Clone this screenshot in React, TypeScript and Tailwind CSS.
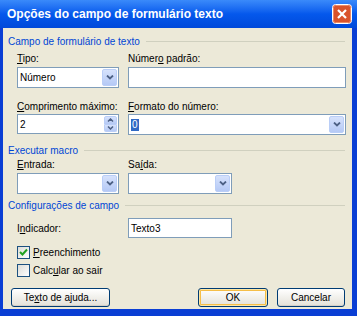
const font = { fontFamily: '"Liberation Sans", Arial, sans-serif' };

function Chevron() {
  return (
    <svg width="8" height="5" viewBox="0 0 8 5">
      <path d="M1 0.5 L4 3.5 L7 0.5" fill="none" stroke="#4D6185" strokeWidth="1.8" />
    </svg>
  );
}

function DropButton() {
  return (
    <div className="my-px mr-px flex w-[15px] items-center justify-center rounded-[2px] border border-[#BACEF7] bg-gradient-to-b from-[#D6E2FC] to-[#B5C9F5]">
      <Chevron />
    </div>
  );
}

function Combo({ width, value, selected }: { width: string; value?: string; selected?: boolean }) {
  return (
    <div className={`flex h-[21px] ${width} border border-[#7F9DB9] bg-white`}>
      <div className="flex flex-1 items-center pl-[2px] text-[10px] text-black">
        {selected ? <span className="bg-[#316AC5] px-px leading-[12px] text-white">0</span> : value}
      </div>
      <DropButton />
    </div>
  );
}

function Label({ children }: { children: React.ReactNode }) {
  return <div className="h-[13px] text-[10px] leading-[13px] text-black">{children}</div>;
}

function Section({ title }: { title: string }) {
  return (
    <div className="flex h-[13px] items-center">
      <span className="text-[10px] leading-[13px] text-[#0046D5]">{title}</span>
      <div className="ml-[6px] h-px flex-1 bg-[#D0D0BF]" />
    </div>
  );
}

function Checkbox({ checked, children }: { checked?: boolean; children: React.ReactNode }) {
  return (
    <div className="ml-[9px] flex h-[13px] items-center">
      <div className="flex h-[13px] w-[13px] items-center justify-center border border-[#1C5180] bg-gradient-to-br from-[#DCDCD7] to-white">
        {checked && (
          <svg width="9" height="9" viewBox="0 0 9 9">
            <path d="M1 4 L3.5 6.5 L8 1.5" fill="none" stroke="#21A121" strokeWidth="2" />
          </svg>
        )}
      </div>
      <span className="ml-[3px] text-[10px] leading-[13px] text-black">{children}</span>
    </div>
  );
}

function Button({ width, children, def }: { width: string; children: React.ReactNode; def?: boolean }) {
  return (
    <div
      className={`flex h-[19px] ${width} items-center justify-center rounded-[3px] border border-[#003C74] bg-gradient-to-b from-white to-[#E3E1D8] text-[10px] text-black ${
        def ? "shadow-[inset_0_0_0_1px_#FFE7A2,inset_0_0_0_2px_#F5BE48]" : "shadow-[inset_0_-1px_0_#D6D0C5]"
      }`}
    >
      {children}
    </div>
  );
}

function CloseButton() {
  return (
    <svg width="20" height="20" viewBox="0 0 20 20">
      <rect x="0.5" y="0.5" width="19" height="19" rx="3" fill="#D9532B" stroke="#FFFFFF" />
      <rect x="1.5" y="1.5" width="17" height="17" rx="2" fill="none" stroke="#EE8A64" />
      <path d="M6 6 L14 14 M14 6 L6 14" stroke="#FFFFFF" strokeWidth="2.2" />
    </svg>
  );
}

export default function App() {
  return (
    <div className="flex h-[316px] w-[357px] flex-col bg-[#0A3ED4]" style={font}>
      {/* Title bar */}
      <div className="flex h-[28px] items-center bg-gradient-to-b from-[#3A8AFA] via-[#0558EC] to-[#0049DA] pl-[7px] pr-[5px]">
        <span className="flex-1 text-[12px] font-bold text-white">Opções do campo de formulário texto</span>
        <CloseButton />
      </div>

      {/* Body */}
      <div className="mb-[7px] ml-[3px] mr-[5px] flex flex-1 flex-col bg-[#ECE9D8] pl-[5px] pr-[6px] pt-[7px]">
        <div className="mr-px">
          <Section title="Campo de formulário de texto" />
        </div>

        <div className="mt-[4px] ml-[9px] flex gap-[9px]">
          <div className="w-[102px]">
            <Label>
              <u>T</u>ipo:
            </Label>
            <div className="mt-[2px]">
              <Combo width="w-[102px]" value="Número" />
            </div>
          </div>
          <div className="flex-1">
            <Label>
              Númer<u>o</u> padrão:
            </Label>
            <div className="mt-[2px] h-[21px] border border-[#7F9DB9] bg-white" />
          </div>
        </div>

        <div className="mt-[12px] ml-[9px] flex gap-[9px]">
          <div className="w-[102px]">
            <Label>
              <u>C</u>omprimento máximo:
            </Label>
            <div className="mt-px flex h-[20px] w-[102px] border border-[#7F9DB9] bg-white">
              <div className="flex flex-1 items-center pl-[2px] text-[10px]">2</div>
              <div className="my-px mr-px flex w-[13px] flex-col">
                <div className="flex flex-1 items-center justify-center rounded-t-[2px] border border-[#BACEF7] bg-gradient-to-b from-[#D6E2FC] to-[#B5C9F5]">
                  <svg width="7" height="4" viewBox="0 0 7 4">
                    <path d="M1 3.5 L3.5 1 L6 3.5" fill="none" stroke="#4D6185" strokeWidth="1.5" />
                  </svg>
                </div>
                <div className="flex flex-1 items-center justify-center rounded-b-[2px] border border-t-0 border-[#BACEF7] bg-gradient-to-b from-[#D6E2FC] to-[#B5C9F5]">
                  <svg width="7" height="4" viewBox="0 0 7 4">
                    <path d="M1 0.5 L3.5 3 L6 0.5" fill="none" stroke="#4D6185" strokeWidth="1.5" />
                  </svg>
                </div>
              </div>
            </div>
          </div>
          <div className="flex-1">
            <Label>
              <u>F</u>ormato do número:
            </Label>
            <div className="mt-px">
              <Combo width="w-full h-[20px]" selected />
            </div>
          </div>
        </div>

        <div className="mt-[9px] mr-px">
          <Section title="Executar macro" />
        </div>

        <div className="mt-px ml-[9px] flex gap-[9px]">
          <div className="w-[102px]">
            <Label>
              <u>E</u>ntrada:
            </Label>
            <div className="mt-[2px]">
              <Combo width="w-[102px]" />
            </div>
          </div>
          <div className="w-[104px]">
            <Label>
              Sa<u>í</u>da:
            </Label>
            <div className="mt-[2px]">
              <Combo width="w-[104px]" />
            </div>
          </div>
        </div>

        <div className="mt-[5px] mr-px">
          <Section title="Configurações de campo" />
        </div>

        <div className="mt-[6px] ml-[9px] flex items-center gap-[9px]">
          <div className="w-[102px] text-[10px] text-black">
            I<u>n</u>dicador:
          </div>
          <div className="flex h-[20px] w-[104px] items-center border border-[#7F9DB9] bg-white pl-[2px] text-[10px] text-black">
            Texto3
          </div>
        </div>

        <div className="mt-[8px]">
          <Checkbox checked>
            <u>P</u>reenchimento
          </Checkbox>
        </div>
        <div className="mt-[5px]">
          <Checkbox>
            Calc<u>u</u>lar ao sair
          </Checkbox>
        </div>

        <div className="mt-[11px] ml-[3px] mr-px flex">
          <Button width="w-[99px]">
            Te<u>x</u>to de ajuda...
          </Button>
          <div className="flex-1" />
          <Button width="w-[70px]" def>
            OK
          </Button>
          <div className="w-[9px]" />
          <Button width="w-[68px]">Cancelar</Button>
        </div>
      </div>
    </div>
  );
}
